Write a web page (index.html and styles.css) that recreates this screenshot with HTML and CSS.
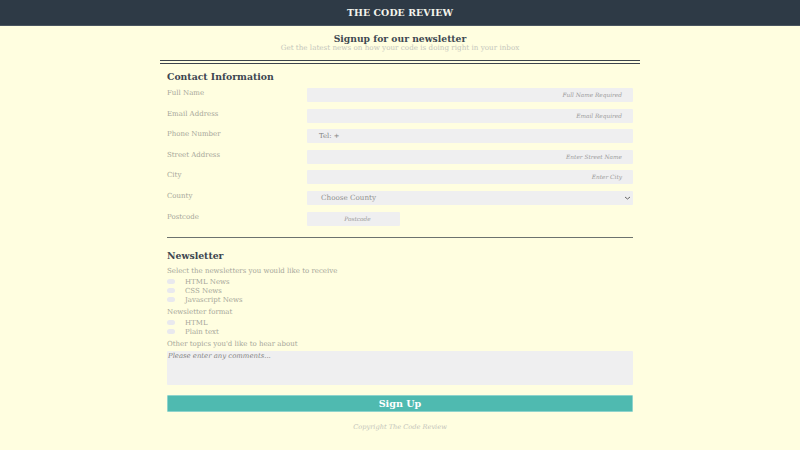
FILE: index.html
```html
<!DOCTYPE html>
<html>
<head>
<meta charset="utf-8">
<link rel="stylesheet" href="styles.css">
</head>
<body>
<header class="topbar">THE CODE REVIEW</header>
<main class="wrap">
  <div class="intro">
    <h1>Signup for our newsletter</h1>
    <p>Get the latest news on how your code is doing right in your inbox</p>
  </div>
  <div class="double-rule"></div>
  <form class="form">
    <h2>Contact Information</h2>
    <div class="row"><label>Full Name</label><div class="field right"><em>Full Name Required</em></div></div>
    <div class="row"><label>Email Address</label><div class="field right"><em>Email Required</em></div></div>
    <div class="row"><label>Phone Number</label><div class="field tel">Tel: +</div></div>
    <div class="row"><label>Street Address</label><div class="field right"><em>Enter Street Name</em></div></div>
    <div class="row"><label>City</label><div class="field right"><em>Enter City</em></div></div>
    <div class="row"><label>County</label><div class="field select"><span>Choose County</span><svg width="7" height="4" viewBox="0 0 7 4"><path d="M1 1l2.5 2L6 1" fill="none" stroke="#666" stroke-width="1"/></svg></div></div>
    <div class="row"><label>Postcode</label><div class="field post"><em>Postcode</em></div></div>
    <div class="rule"></div>
    <h2 class="nl">Newsletter</h2>
    <p class="q">Select the newsletters you would like to receive</p>
    <div class="opt"><span class="box"></span>HTML News</div>
    <div class="opt"><span class="box"></span>CSS News</div>
    <div class="opt"><span class="box"></span>Javascript News</div>
    <p class="q q2">Newsletter format</p>
    <div class="opt"><span class="box round"></span>HTML</div>
    <div class="opt"><span class="box round"></span>Plain text</div>
    <p class="q q3">Other topics you'd like to hear about</p>
    <div class="textarea"><em>Please enter any comments...</em></div>
    <div class="btn">Sign Up</div>
    <p class="copy">Copyright The Code Review</p>
  </form>
</main>
</body>
</html>
```
FILE: styles.css
```css
* { box-sizing: border-box; }
html, body { margin: 0; padding: 0; }
body {
  background: #fffee0;
  font-family: "DejaVu Serif", "Liberation Serif", serif;
  color: #3d4852;
  width: 800px;
  height: 450px;
  overflow: hidden;
}
.topbar {
  height: 26px;
  background: #2e3a46;
  border-bottom: 1px solid #4a5560;
  color: #f4f4ec;
  font-weight: bold;
  font-size: 9.4px;
  display: flex;
  align-items: center;
  justify-content: center;
  letter-spacing: 0.1px;
}
.wrap {
  width: 480px;
  margin: 0 auto;
}
.intro { text-align: center; padding-top: 7px; }
.intro h1 {
  margin: 0;
  font-size: 9.2px;
  font-weight: bold;
  color: #3f4a52;
  line-height: 11px;
}
.intro p {
  margin: 0;
  font-size: 7.2px;
  color: #c5c6bc;
  line-height: 8px;
}
.double-rule {
  margin-top: 8px;
  height: 4px;
  border-top: 1.5px solid #3c444c;
  border-bottom: 1.5px solid #3c444c;
}
.form { padding: 0 7px; }
.form h2 {
  margin: 7px 0 0;
  font-size: 9.3px;
  font-weight: bold;
  color: #3d4650;
  line-height: 12px;
}
.row {
  display: flex;
  height: 14px;
  margin-bottom: 6.6px;
}
.form h2 + .row { margin-top: 5px; }
.row label {
  width: 140px;
  font-size: 7px;
  color: #a6a69a;
  line-height: 10px;
}
.field {
  flex: 1;
  background: #efeff0;
  border-radius: 1px;
  font-size: 6.8px;
  color: #9a9a9a;
  display: flex;
  align-items: center;
}
.field em { font-style: italic; font-size: 5.8px; }
.right { justify-content: flex-end; padding-right: 11px; }
.tel { padding-left: 12px; color: #7f7f7f; font-size: 6.8px; }
.select { justify-content: space-between; padding-left: 14px; padding-right: 2px; color: #8f8f8f; font-size: 7.2px; }
.post { flex: 0 0 93px; justify-content: center; padding-left: 8px; }
.rule {
  margin-top: 11px;
  height: 1.5px;
  background: #6c726e;
}
.form h2.nl { margin-top: 12px; }
.q {
  margin: 5px 0 0;
  font-size: 7px;
  color: #a6a69a;
  line-height: 9px;
}
.q2 { margin-top: 4px; }
.q3 { margin-top: 4px; }
.opt {
  display: flex;
  align-items: center;
  height: 9px;
  font-size: 7px;
  color: #a6a69a;
}
.q + .opt { margin-top: 1px; }
.box {
  width: 8px;
  height: 5px;
  background: #e9e9ee;
  border-radius: 2.5px;
  margin-right: 10px;
}
.textarea {
  margin-top: 2px;
  height: 34px;
  background: #efeff0;
  border-radius: 1px;
  padding: 1px 1px;
  font-size: 6.9px;
  color: #848484;
  line-height: 8px;
}
.btn {
  margin-top: 10px;
  height: 17px;
  background: #4fbab0;
  border: 1px solid #8fd3cc;
  border-radius: 1px;
  color: #ffffff;
  font-weight: bold;
  font-size: 9.6px;
  display: flex;
  align-items: center;
  justify-content: center;
}
.copy {
  margin: 11px 0 0;
  text-align: center;
  font-style: italic;
  font-size: 6.6px;
  color: #c4c5bb;
}
```
